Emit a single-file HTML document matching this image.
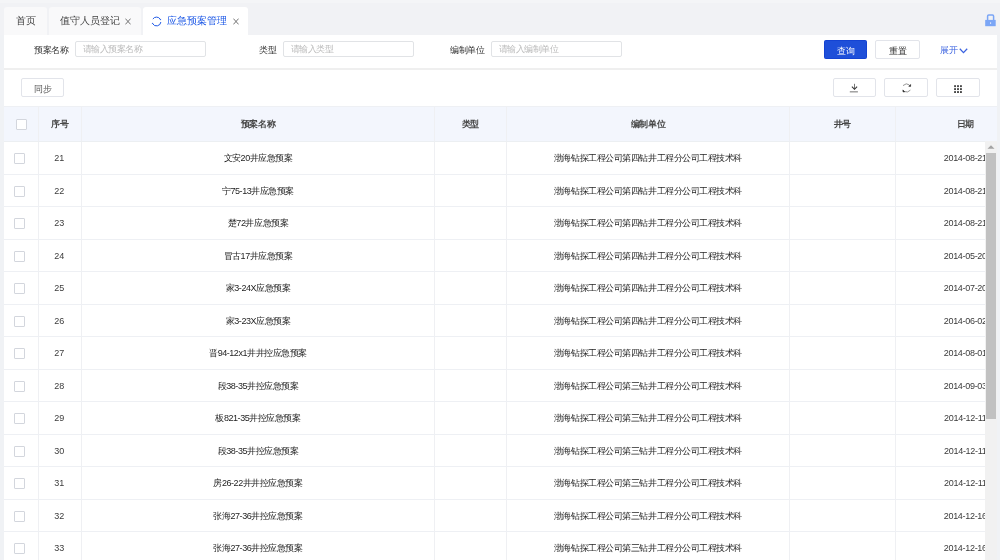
<!DOCTYPE html>
<html><head><meta charset="utf-8">
<style>
*{box-sizing:border-box;margin:0;padding:0}
html,body{width:1000px;height:560px;overflow:hidden;background:#f0f2f5;font-family:"Liberation Sans",sans-serif;color:#333}
.abs{position:absolute}
.tabbar{position:absolute;left:0;top:0;width:1000px;height:35px;background:linear-gradient(#f4f5f7 0,#f4f5f7 3px,#f1f2f5 3px)}
.tab{position:absolute;top:7px;height:28px;background:#f9f9fa;border-radius:3px 3px 0 0;font-size:10px;color:#444;line-height:28px;white-space:nowrap}
.tab.active{background:#fff;color:#1d58e6}
.x{position:absolute}
.card1{position:absolute;left:4px;top:35px;width:993px;height:33px;background:#fff}
.card2{position:absolute;left:4px;top:70px;width:993px;height:490px;background:#fff;overflow:hidden}
.lbl{position:absolute;top:9px;font-size:9px;letter-spacing:-0.4px;color:#333;line-height:12px;white-space:nowrap}
.inp{position:absolute;top:6px;width:131px;height:16px;border:1px solid #e1e3e6;border-radius:2px;font-size:9px;letter-spacing:-0.55px;color:#bbb;line-height:14px;padding-left:7px;white-space:nowrap}
.btn{position:absolute;border:1px solid #e2e4ea;border-radius:2px;background:#fff;font-size:9px;color:#333;text-align:center;white-space:nowrap}
.thead{position:absolute;left:0;top:36px;width:993px;height:36px;background:#f3f6fd;border-top:1px solid #eef0f4;border-bottom:1px solid #eceff2}
.row{position:absolute;left:0;width:1040px;height:32.5px;border-bottom:1px solid #eef0f4}
.c{position:absolute;top:0;height:100%;border-right:1px solid #eff0f3;text-align:center;font-size:9px;white-space:nowrap;overflow:hidden}
.thead .c{font-weight:bold;line-height:34px;padding-top:0;color:#484848;font-size:9px;letter-spacing:-0.4px}
.row .c{line-height:32.5px;padding-top:0;color:#1e1e1e;font-size:9px;letter-spacing:-0.45px}
.c0{left:0;width:35px}
.c1{left:35px;width:43px}
.row .c1{text-indent:-1.5px;color:#3c3c3c;letter-spacing:0}
.thead .c6{text-indent:3px}
.row .c6{letter-spacing:-0.3px;text-indent:2.5px;color:#3a3a3a}
.c2{left:78px;width:353px}
.c3{left:431px;width:72px}
.c4{left:503px;width:283px}
.c5{left:786px;width:106px}
.c6{left:892px;width:136px;border-right:none}
.cb{position:absolute;left:10px;top:11px;width:11px;height:11px;border:1px solid #d3d6dd;border-radius:1px;background:#fff}
.thead .cb{left:12px;top:12px}
.sb{position:absolute;left:981px;top:71px;width:12px;height:420px;background:#f1f1f1}
.sbt{position:absolute;left:982px;top:83.4px;width:9.5px;height:265.5px;background:#c1c1c1}
</style></head><body><div style="position:absolute;left:0;top:0;width:1000px;height:560px;will-change:transform">
<div class="tabbar">
  <div class="tab" style="left:4px;width:43px"><span class="abs" style="left:11.5px">首页</span></div>
  <div class="tab" style="left:49px;width:92px"><span class="abs" style="left:11px">值守人员登记</span><svg class="x" style="left:76px;top:11px" width="6" height="7" viewBox="0 0 6 7"><path d="M0.4 0.6L5.6 6.4M5.6 0.6L0.4 6.4" stroke="#666" stroke-width="0.9" fill="none"/></svg></div>
  <div class="tab active" style="left:143px;width:105px">
    <svg class="abs" style="left:8.2px;top:8.9px" width="11" height="11" viewBox="0 0 11 11"><path d="M1.85 3.04A4.4 4.4 0 0 1 9.27 3.23M9.87 6.04A4.4 4.4 0 0 1 1.69 7.7" fill="none" stroke="#1d58e6" stroke-width="1"/><path d="M9.9 4.3L10.2 2.7L8.3 3.8Z" fill="#1d58e6"/><path d="M1.1 6.66L0.74 8.25L2.64 7.15Z" fill="#1d58e6"/></svg>
    <span class="abs" style="left:24px">应急预案管理</span><svg class="x" style="left:90px;top:11px" width="6" height="7" viewBox="0 0 6 7"><path d="M0.4 0.6L5.6 6.4M5.6 0.6L0.4 6.4" stroke="#666" stroke-width="0.9" fill="none"/></svg></div>
  <svg class="abs" style="left:985px;top:13.5px" width="11" height="13" viewBox="0 0 11 13"><path d="M2.6 6.3V2.2Q2.6 1.1 3.7 1.1H7.5Q8.6 1.1 8.6 2.2V6.3" fill="none" stroke="#7ba6f6" stroke-width="1.5"/><rect x="0.2" y="5.9" width="10.5" height="6.3" fill="#7ba6f6"/><rect x="5.1" y="8.3" width="1" height="1.6" fill="#e8eefc"/></svg>
</div>
<div class="card1">
  <div class="lbl" style="left:30px">预案名称</div>
  <div class="inp" style="left:71px">请输入预案名称</div>
  <div class="lbl" style="left:255px">类型</div>
  <div class="inp" style="left:279px">请输入类型</div>
  <div class="lbl" style="left:446px">编制单位</div>
  <div class="inp" style="left:487px">请输入编制单位</div>
  <div class="btn" style="left:820px;top:5px;width:43px;height:19px;background:#1e4fd9;border-color:#1443d2;border-radius:1.5px;color:#fff;line-height:20px">查询</div>
  <div class="btn" style="left:871px;top:5px;width:45px;height:19px;line-height:20px">重置</div>
  <div class="lbl" style="left:936px;color:#3a62e0">展开</div>
  <svg class="abs" style="left:955px;top:13px" width="9" height="6" viewBox="0 0 9 6"><path d="M0.8 0.8L4.5 4.6L8.2 0.8" fill="none" stroke="#3a62e0" stroke-width="1.3"/></svg>
</div>
<div class="abs" style="left:4px;top:68px;width:993px;height:2px;background:#efefef"></div>
<div class="card2">
  <div class="btn" style="left:17px;top:8px;width:43px;height:19px;line-height:21px;color:#555">同步</div>
  <div class="btn" style="left:829px;top:8px;width:43px;height:19px"></div>
  <div class="btn" style="left:880px;top:8px;width:44px;height:19px"></div>
  <div class="btn" style="left:932px;top:8px;width:44px;height:19px"></div>
  <svg class="abs" style="left:841px;top:8px" width="25" height="20" viewBox="0 0 25 20"><path d="M9.5 5.8V11.2" stroke="#666" stroke-width="0.9"/><path d="M6.9 8.6L9.5 11.3L12.1 8.6" fill="none" stroke="#333" stroke-width="1.05"/><path d="M4.8 13.8H12.9" stroke="#9a9a9a" stroke-width="1.4"/></svg>
  <svg class="abs" style="left:891px;top:8px" width="25" height="20" viewBox="0 0 25 20"><path d="M8 7.6Q11.3 4.4 14.3 6.9" fill="none" stroke="#8a8a8a" stroke-width="0.9"/><path d="M13.8 8.3L15.6 6.5L15.6 8.4Z" fill="#2a2a2a" stroke="#2a2a2a" stroke-width="0.6"/><path d="M9.6 13.6Q12.8 15 15.4 12.1" fill="none" stroke="#8a8a8a" stroke-width="0.9"/><path d="M7.9 11.9L8 13.9L9.8 13.8Z" fill="#2a2a2a" stroke="#2a2a2a" stroke-width="0.6"/></svg>
  <svg class="abs" style="left:950px;top:14.6px" width="9" height="9" viewBox="0 0 9 9"><g fill="#474747"><rect x="0.1" y="0.2" width="1.9" height="1.9"/><rect x="3.05" y="0.2" width="1.9" height="1.9"/><rect x="6" y="0.2" width="1.9" height="1.9"/><rect x="0.1" y="3.15" width="1.9" height="1.9"/><rect x="3.05" y="3.15" width="1.9" height="1.9"/><rect x="6" y="3.15" width="1.9" height="1.9"/><rect x="0.1" y="6.1" width="1.9" height="1.9"/><rect x="3.05" y="6.1" width="1.9" height="1.9"/><rect x="6" y="6.1" width="1.9" height="1.9"/></g></svg>
  <div class="thead">
    <div class="c c0"><span class="cb"></span></div><div class="c c1">序号</div><div class="c c2">预案名称</div><div class="c c3">类型</div><div class="c c4">编制单位</div><div class="c c5">井号</div><div class="c c6">日期</div>
  </div>
  <div class="abs" style="left:0;top:0;width:993px;height:490px">
  <div class="row" style="top:72.0px">
<div class="c c0"><span class="cb"></span></div><div class="c c1">21</div><div class="c c2">文安20井应急预案</div><div class="c c3"></div><div class="c c4">渤海钻探工程公司第四钻井工程分公司工程技术科</div><div class="c c5"></div><div class="c c6">2014-08-21</div></div>
<div class="row" style="top:104.5px">
<div class="c c0"><span class="cb"></span></div><div class="c c1">22</div><div class="c c2">宁75-13井应急预案</div><div class="c c3"></div><div class="c c4">渤海钻探工程公司第四钻井工程分公司工程技术科</div><div class="c c5"></div><div class="c c6">2014-08-21</div></div>
<div class="row" style="top:137.0px">
<div class="c c0"><span class="cb"></span></div><div class="c c1">23</div><div class="c c2">楚72井应急预案</div><div class="c c3"></div><div class="c c4">渤海钻探工程公司第四钻井工程分公司工程技术科</div><div class="c c5"></div><div class="c c6">2014-08-21</div></div>
<div class="row" style="top:169.5px">
<div class="c c0"><span class="cb"></span></div><div class="c c1">24</div><div class="c c2">冒古17井应急预案</div><div class="c c3"></div><div class="c c4">渤海钻探工程公司第四钻井工程分公司工程技术科</div><div class="c c5"></div><div class="c c6">2014-05-20</div></div>
<div class="row" style="top:202.0px">
<div class="c c0"><span class="cb"></span></div><div class="c c1">25</div><div class="c c2">家3-24X应急预案</div><div class="c c3"></div><div class="c c4">渤海钻探工程公司第四钻井工程分公司工程技术科</div><div class="c c5"></div><div class="c c6">2014-07-20</div></div>
<div class="row" style="top:234.5px">
<div class="c c0"><span class="cb"></span></div><div class="c c1">26</div><div class="c c2">家3-23X应急预案</div><div class="c c3"></div><div class="c c4">渤海钻探工程公司第四钻井工程分公司工程技术科</div><div class="c c5"></div><div class="c c6">2014-06-02</div></div>
<div class="row" style="top:267.0px">
<div class="c c0"><span class="cb"></span></div><div class="c c1">27</div><div class="c c2">晋94-12x1井井控应急预案</div><div class="c c3"></div><div class="c c4">渤海钻探工程公司第四钻井工程分公司工程技术科</div><div class="c c5"></div><div class="c c6">2014-08-01</div></div>
<div class="row" style="top:299.5px">
<div class="c c0"><span class="cb"></span></div><div class="c c1">28</div><div class="c c2">段38-35井控应急预案</div><div class="c c3"></div><div class="c c4">渤海钻探工程公司第三钻井工程分公司工程技术科</div><div class="c c5"></div><div class="c c6">2014-09-03</div></div>
<div class="row" style="top:332.0px">
<div class="c c0"><span class="cb"></span></div><div class="c c1">29</div><div class="c c2">板821-35井控应急预案</div><div class="c c3"></div><div class="c c4">渤海钻探工程公司第三钻井工程分公司工程技术科</div><div class="c c5"></div><div class="c c6">2014-12-11</div></div>
<div class="row" style="top:364.5px">
<div class="c c0"><span class="cb"></span></div><div class="c c1">30</div><div class="c c2">段38-35井控应急预案</div><div class="c c3"></div><div class="c c4">渤海钻探工程公司第三钻井工程分公司工程技术科</div><div class="c c5"></div><div class="c c6">2014-12-11</div></div>
<div class="row" style="top:397.0px">
<div class="c c0"><span class="cb"></span></div><div class="c c1">31</div><div class="c c2">房26-22井井控应急预案</div><div class="c c3"></div><div class="c c4">渤海钻探工程公司第三钻井工程分公司工程技术科</div><div class="c c5"></div><div class="c c6">2014-12-11</div></div>
<div class="row" style="top:429.5px">
<div class="c c0"><span class="cb"></span></div><div class="c c1">32</div><div class="c c2">张海27-36井控应急预案</div><div class="c c3"></div><div class="c c4">渤海钻探工程公司第三钻井工程分公司工程技术科</div><div class="c c5"></div><div class="c c6">2014-12-16</div></div>
<div class="row" style="top:462.0px">
<div class="c c0"><span class="cb"></span></div><div class="c c1">33</div><div class="c c2">张海27-36井控应急预案</div><div class="c c3"></div><div class="c c4">渤海钻探工程公司第三钻井工程分公司工程技术科</div><div class="c c5"></div><div class="c c6">2014-12-16</div></div>
  </div>
  <div class="sb"></div><div class="sbt"></div><svg class="abs" style="left:982px;top:74px" width="10" height="6" viewBox="0 0 10 6"><path d="M1.5 4.8L5 1.2L8.5 4.8Z" fill="#a3a3a3"/></svg>
</div>
</div></body></html>
